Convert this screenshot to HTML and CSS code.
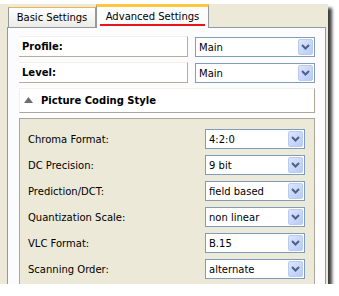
FILE: index.html
```html
<!DOCTYPE html>
<html>
<head>
<meta charset="utf-8">
<link rel="stylesheet" href="styles.css">
</head>
<body>
<div class="window">
  <div class="tabs">
    <div class="tab">Basic Settings</div>
    <div class="tab active"><span class="tab-label">Advanced Settings</span></div>
  </div>
  <div class="panel">
    <div class="row">
      <div class="field-label">Profile:</div>
      <div class="select wide"><span class="value">Main</span><span class="drop"><svg width="9" height="6" viewBox="0 0 9 6"><path d="M1 1 L4.5 4.5 L8 1" fill="none" stroke="#4D6185" stroke-width="2"/></svg></span></div>
    </div>
    <div class="row">
      <div class="field-label">Level:</div>
      <div class="select wide"><span class="value">Main</span><span class="drop"><svg width="9" height="6" viewBox="0 0 9 6"><path d="M1 1 L4.5 4.5 L8 1" fill="none" stroke="#4D6185" stroke-width="2"/></svg></span></div>
    </div>
    <div class="group-header">
      <svg class="tri" width="9" height="6" viewBox="0 0 9 6"><path d="M4.5 0 L9 6 L0 6 Z" fill="#6F6F6F"/></svg>
      <span>Picture Coding Style</span>
    </div>
    <div class="section">
      <div class="srow"><span class="slabel">Chroma Format:</span><div class="select"><span class="value">4:2:0</span><span class="drop"><svg width="9" height="6" viewBox="0 0 9 6"><path d="M1 1 L4.5 4.5 L8 1" fill="none" stroke="#4D6185" stroke-width="2"/></svg></span></div></div>
      <div class="srow"><span class="slabel">DC Precision:</span><div class="select"><span class="value">9 bit</span><span class="drop"><svg width="9" height="6" viewBox="0 0 9 6"><path d="M1 1 L4.5 4.5 L8 1" fill="none" stroke="#4D6185" stroke-width="2"/></svg></span></div></div>
      <div class="srow"><span class="slabel">Prediction/DCT:</span><div class="select"><span class="value">field based</span><span class="drop"><svg width="9" height="6" viewBox="0 0 9 6"><path d="M1 1 L4.5 4.5 L8 1" fill="none" stroke="#4D6185" stroke-width="2"/></svg></span></div></div>
      <div class="srow"><span class="slabel">Quantization Scale:</span><div class="select"><span class="value">non linear</span><span class="drop"><svg width="9" height="6" viewBox="0 0 9 6"><path d="M1 1 L4.5 4.5 L8 1" fill="none" stroke="#4D6185" stroke-width="2"/></svg></span></div></div>
      <div class="srow"><span class="slabel">VLC Format:</span><div class="select"><span class="value">B.15</span><span class="drop"><svg width="9" height="6" viewBox="0 0 9 6"><path d="M1 1 L4.5 4.5 L8 1" fill="none" stroke="#4D6185" stroke-width="2"/></svg></span></div></div>
      <div class="srow"><span class="slabel">Scanning Order:</span><div class="select"><span class="value">alternate</span><span class="drop"><svg width="9" height="6" viewBox="0 0 9 6"><path d="M1 1 L4.5 4.5 L8 1" fill="none" stroke="#4D6185" stroke-width="2"/></svg></span></div></div>
    </div>
  </div>
</div>
</body>
</html>
```

FILE: styles.css
```css
html, body {
  margin: 0;
  padding: 0;
  background: #ffffff;
}
body {
  font-family: "DejaVu Sans", sans-serif;
  font-size: 10px;
  color: #000;
}
.window {
  margin-top: 4px;
  width: 328px;
  height: 280px;
  background: #ECE9D8;
  box-shadow: 4px 4px 3px rgba(0, 0, 0, 0.75);
  overflow: hidden;
  display: flex;
  flex-direction: column;
}
.tabs {
  display: flex;
  align-items: flex-end;
  height: 23px;
  padding-left: 8px;
  position: relative;
  z-index: 2;
}
.tab {
  box-sizing: border-box;
  width: 88px;
  height: 20px;
  border: 1px solid #919B9C;
  border-top: 1px solid #EDB44A;
  border-bottom: none;
  background: linear-gradient(#FFFFFF, #ECEBE6);
  display: flex;
  align-items: center;
  justify-content: center;
  padding-bottom: 1px;
}
.tab.active {
  width: 113px;
  border-top: 3px solid #FFC83C;
  background: #FCFCFE;
  padding-bottom: 0;
  align-items: flex-start;
  padding-top: 4px;
  height: 24px;
  margin-bottom: -1px;
}
.tab-label {
  border-bottom: 2px solid #E8141A;
  padding: 0 6px 1px;
  line-height: 12px;
}
.panel {
  margin-left: 7px;
  width: 319px;
  box-sizing: border-box;
  flex: 1;
  border: 1px solid #919B9C;
  border-bottom: none;
  background: #FCFCFE;
  padding: 8px 0 0 11px;
  display: flex;
  flex-direction: column;
}
.row {
  display: flex;
  align-items: flex-start;
  height: 21px;
  margin-bottom: 5px;
}
.field-label {
  box-sizing: border-box;
  width: 169px;
  height: 21px;
  border-right: 1px solid #B3AE9C;
  border-bottom: 1px solid #B3AE9C;
  border-top: 1px solid #F2F1EC;
  background: #FFFFFF;
  font-weight: bold;
  padding-left: 3px;
  display: flex;
  align-items: center;
}
.select {
  box-sizing: border-box;
  width: 100px;
  height: 20px;
  border: 1px solid #7F9DB9;
  background: #FFFFFF;
  display: flex;
  padding: 1px;
}
.select.wide {
  width: 120px;
  margin-left: 7px;
  margin-top: 1px;
}
.value {
  flex: 1;
  display: flex;
  align-items: center;
  padding-left: 2px;
}
.drop {
  box-sizing: border-box;
  width: 15px;
  height: 16px;
  border: 1px solid #BACBF1;
  border-radius: 2px;
  background: linear-gradient(135deg, #DCE6FD, #B7CAF7);
  display: flex;
  align-items: center;
  justify-content: center;
}
.group-header {
  box-sizing: border-box;
  width: 296px;
  height: 25px;
  border: 1px solid #F0EFEA;
  border-right-color: #ACA899;
  border-bottom-color: #ACA899;
  background: #FFFFFF;
  display: flex;
  align-items: center;
  font-weight: bold;
  padding-left: 4px;
  margin-bottom: 5px;
}
.tri {
  margin-right: 8px;
  margin-top: -1px;
}
.section {
  box-sizing: border-box;
  width: 296px;
  flex: 1;
  border: 1px solid #ACA899;
  border-bottom: none;
  background: #ECE9D8;
  padding: 10px 9px 0 8px;
  display: flex;
  flex-direction: column;
  gap: 6px;
}
.srow {
  display: flex;
  align-items: center;
  justify-content: space-between;
  height: 20px;
}
```
